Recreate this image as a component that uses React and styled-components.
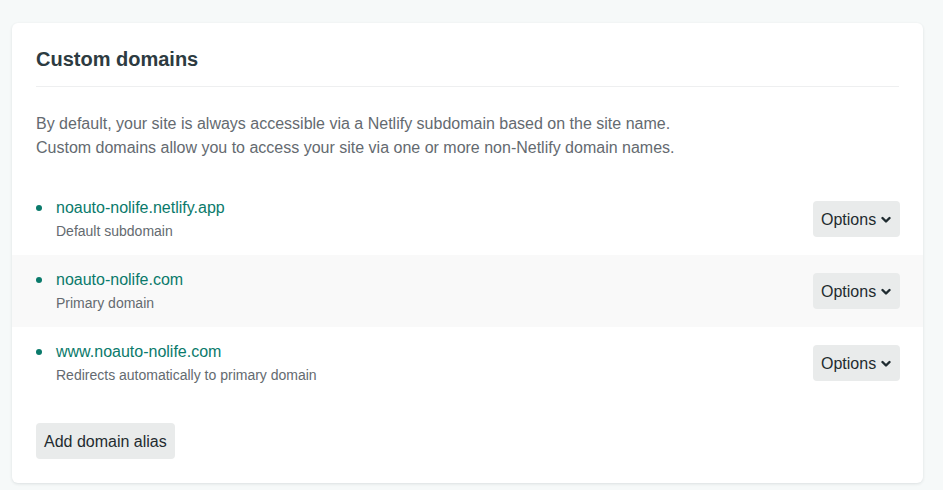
import React from "react";
import styled, { createGlobalStyle } from "styled-components";

const Global = createGlobalStyle`
  body {
    margin: 0;
    background: #f6f9f9;
    font-family: "Liberation Sans", Arial, sans-serif;
  }
`;

const Page = styled.div`
  padding: 23px 20px 7px 12px;
`;

const Card = styled.section`
  background: #ffffff;
  border-radius: 6px;
  box-shadow: 0 1px 3px rgba(30, 50, 60, 0.12);
  padding: 24px 0 24px;
`;

const Header = styled.div`
  margin: 0 24px;
  padding-bottom: 15px;
  border-bottom: 1px solid #eeeff0;
`;

const Title = styled.h2`
  margin: 0;
  font-size: 20px;
  line-height: 24px;
  font-weight: 700;
  color: #2d3b41;
`;

const Description = styled.p`
  margin: 25px 24px 23px;
  font-size: 16px;
  line-height: 24px;
  color: #646a70;
`;

const List = styled.ul`
  list-style: none;
  margin: 0;
  padding: 0;
`;

const Row = styled.li`
  display: flex;
  align-items: center;
  justify-content: space-between;
  height: 72px;
  padding: 0 23px 0 24px;
  box-sizing: border-box;
  background: ${(p) => (p.$shaded ? "#f9f9f9" : "transparent")};
`;

const Info = styled.div`
  display: flex;
  align-items: flex-start;
  margin-top: -1px;
`;

const Bullet = styled.span`
  width: 6px;
  height: 6px;
  border-radius: 50%;
  background: #0a7a6b;
  margin: 9px 14px 0 0;
  flex: none;
`;

const Domain = styled.a`
  display: block;
  font-size: 16px;
  line-height: 24px;
  color: #0a7a6b;
  text-decoration: none;
`;

const Note = styled.div`
  font-size: 14px;
  line-height: 22px;
  color: #646a70;
`;

const Button = styled.button`
  display: inline-flex;
  align-items: center;
  gap: 5px;
  height: 36px;
  padding: 1px 8px 0;
  border: none;
  border-radius: 4px;
  background: #e9ebeb;
  color: #1f2b30;
  font-family: inherit;
  font-size: 16px;
  cursor: pointer;
`;

const OptionsButton = styled(Button)`
  padding: 1px 7px 0 8px;
  min-width: 87px;
  justify-content: flex-start;
`;

const Footer = styled.div`
  margin: 24px 24px 0;
`;

const Chevron = () => (
  <svg width="10" height="8" viewBox="0 0 10 8">
    <path d="M1.5 2 L5 5.5 L8.5 2" fill="none" stroke="#1f2b30" strokeWidth="2.4" strokeLinecap="round" strokeLinejoin="round" />
  </svg>
);

const domains = [
  { name: "noauto-nolife.netlify.app", note: "Default subdomain" },
  { name: "noauto-nolife.com", note: "Primary domain" },
  { name: "www.noauto-nolife.com", note: "Redirects automatically to primary domain" },
];

export default function App() {
  return (
    <Page>
      <Global />
      <Card>
        <Header>
          <Title>Custom domains</Title>
        </Header>
        <Description>
          By default, your site is always accessible via a Netlify subdomain based on the site name.
          <br />
          Custom domains allow you to access your site via one or more non-Netlify domain names.
        </Description>
        <List>
          {domains.map((d, i) => (
            <Row key={d.name} $shaded={i === 1}>
              <Info>
                <Bullet />
                <div>
                  <Domain href="#">{d.name}</Domain>
                  <Note>{d.note}</Note>
                </div>
              </Info>
              <OptionsButton>
                Options <Chevron />
              </OptionsButton>
            </Row>
          ))}
        </List>
        <Footer>
          <Button>Add domain alias</Button>
        </Footer>
      </Card>
    </Page>
  );
}
